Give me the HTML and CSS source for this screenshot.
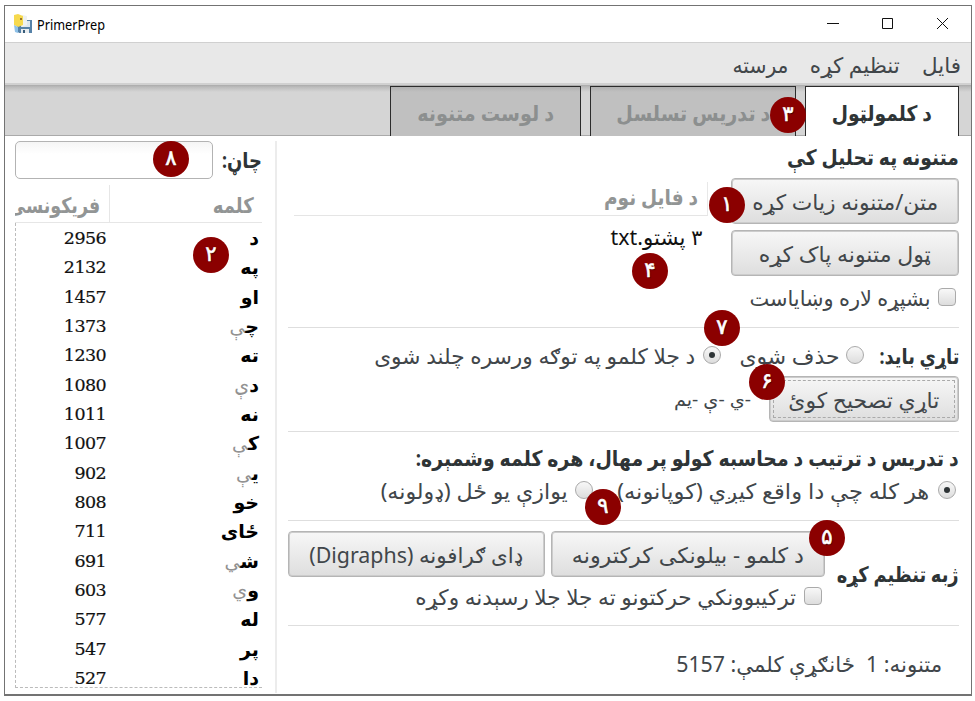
FILE: index.html
```html
<!DOCTYPE html>
<html lang="ps" dir="rtl">
<head>
<meta charset="utf-8">
<title>PrimerPrep</title>
<link rel="stylesheet" href="styles.css">
</head>
<body>
<div class="window">
  <header class="titlebar" dir="ltr">
    <svg class="logo" viewBox="0 0 20 20"><path d="M4 6h15v13H6l-2-2z" fill="#5682a8"/><path d="M8 7h9v6H8z" fill="#dce7ef"/><path d="M8 15h8v4H8z" fill="#e9edf0"/><path d="M10 16h2v3h-2z" fill="#385c7a"/><path d="M9 1l5 1v9l-5 2z" fill="#eef1f0"/><path d="M1 1l4-1 5 2v9l-5 2-4-2z" fill="#f6d94e"/><path d="M1 11l4 2v6l-3-1z" fill="#8ec1e8"/><path d="M7 4h2v2H7z" fill="#96752a"/></svg>
    <span class="app-name"><span class="fit" data-width="68">PrimerPrep</span></span>
    <svg class="controls" viewBox="0 0 124 14"><path d="M0 6.500h12M55.500 1.500h10v10h-10zM110 1l11 11M121 1l-11 11" fill="none" stroke="#111" stroke-width="1"/></svg>
  </header>
  <nav class="menu">
    <span class="fit" data-width="39">فایل</span>
    <span class="fit" data-width="90">تنظیم کړه</span>
    <span class="fit" data-width="56">مرسته</span>
  </nav>
  <div class="tabs">
    <div class="tab active"><span class="fit" data-width="100">د کلمولټول</span></div>
    <div class="tab second"><span class="fit" data-width="154">د تدریس تسلسل</span></div>
    <div class="tab third"><span class="fit" data-width="137">د لوست متنونه</span></div>
  </div>
  <div class="content">
    <main class="main">
      <section class="texts">
        <h2><span class="fit" data-width="172">متنونه په تحلیل کې</span></h2>
        <div class="texts-body">
          <div class="text-actions">
            <button class="btn"><span class="fit" data-width="186">متن/متنونه زیات کړه</span></button>
            <button class="btn"><span class="fit" data-width="172">ټول متنونه پاک کړه</span></button>
            <label class="option"><i class="check"></i><span class="fit" data-width="181">بشپړه لاره وښایاست</span></label>
          </div>
          <div class="files">
            <div class="files-head"><span class="fit" data-width="94">د فایل نوم</span></div>
            <div class="file"><span class="fit" data-width="92">۳ پشتو.txt</span></div>
          </div>
        </div>
      </section>
      <section class="affixes">
        <div class="row affix-options">
          <b><span class="fit" data-width="80">تاړي باید:</span></b>
          <i class="radio first"></i><span class="fit" data-width="100">حذف شوی</span>
          <i class="radio on next"></i><span class="fit" data-width="321">د جلا کلمو په توګه ورسره چلند شوی</span>
        </div>
        <div class="row affix-edit">
          <button class="btn focused"><span class="fit" data-width="151">تاړي تصحیح کوئ</span></button>
          <span class="affix-list"><span class="fit" data-width="77">-ي -ې -یم</span></span>
        </div>
      </section>
      <section class="counting">
        <h2><span class="fit" data-width="543">د تدریس د ترتیب د محاسبه کولو پر مهال، هره کلمه وشمېره:</span></h2>
        <div class="row count-options">
          <i class="radio on"></i><span class="fit" data-width="312">هر کله چې دا واقع کیږي (کوپانونه)</span>
          <i class="radio later"></i><span class="fit" data-width="187">یوازې یو ځل (ډولونه)</span>
        </div>
      </section>
      <section class="language">
        <h2><span class="fit" data-width="122">ژبه تنظیم کړه</span></h2>
        <div class="language-tools">
          <div class="row tool-buttons">
            <button class="btn wide"><span class="fit" data-width="232">د کلمو - بیلونکی کرکترونه</span></button>
            <button class="btn digraphs"><span class="fit" data-width="214">ډای ګرافونه (Digraphs)</span></button>
          </div>
          <label class="option"><i class="check"></i><span class="fit" data-width="381">ترکیبوونکي حرکتونو ته جلا جلا رسېدنه وکړه</span></label>
        </div>
      </section>
      <footer class="stats"><span class="fit" data-width="266">متنونه: 1&nbsp; ځانګړې کلمې: 5157</span></footer>
    </main>
    <aside class="words">
      <div class="filter"><b><span class="fit" data-width="40">چاڼ:</span></b><div class="input"></div></div>
      <div class="words-head"><div class="col-word"><span class="fit" data-width="41">کلمه</span></div><div class="col-freq"><span class="fit" data-width="92">فریکونسی</span></div></div>
      <div class="word-list">
        <div class="word"><b>د</b><span>2956</span></div>
        <div class="word"><b>په</b><span>2132</span></div>
        <div class="word"><b>او</b><span>1457</span></div>
        <div class="word"><b>چ<em>ې</em></b><span>1373</span></div>
        <div class="word"><b>ته</b><span>1230</span></div>
        <div class="word"><b>د<em>ې</em></b><span>1080</span></div>
        <div class="word"><b>نه</b><span>1011</span></div>
        <div class="word"><b>ک<em>ې</em></b><span>1007</span></div>
        <div class="word"><b>ی<em>ې</em></b><span>902</span></div>
        <div class="word"><b>خو</b><span>808</span></div>
        <div class="word"><b>ځای</b><span>711</span></div>
        <div class="word"><b>ش<em>ي</em></b><span>691</span></div>
        <div class="word"><b>و<em>ي</em></b><span>603</span></div>
        <div class="word"><b>له</b><span>577</span></div>
        <div class="word"><b>پر</b><span>547</span></div>
        <div class="word"><b>دا</b><span>527</span></div>
      </div>
    </aside>
  </div>
</div>
<div class="badge b1">۱</div><div class="badge b2">۲</div><div class="badge b3">۳</div>
<div class="badge b4">۴</div><div class="badge b5">۵</div><div class="badge b6">۶</div>
<div class="badge b7">۷</div><div class="badge b8">۸</div><div class="badge b9">۹</div>
<script src="fit.js"></script>
</body>
</html>
```
FILE: styles.css
```css
* { box-sizing: border-box; }
body { margin: 0; height: 701px; padding: 5px 3px 5px 4px; background: #fff; overflow: hidden; position: relative;
  font: 21.5px/30px "Noto Sans", "DejaVu Sans", sans-serif; color: #41464a; direction: rtl; }
h2 { margin: 0; font-size: 21.5px; line-height: 30px; font-weight: bold; color: #2e3436; }
b { color: #2e3436; }
.fit { display: inline-block; white-space: nowrap; flex: none; text-align: start; height: 30px; vertical-align: top; }
.fit > span { display: inline-block; transform-origin: 100% 50%; }
.window { width: 968px; height: 691px; border: 1px solid #737373; border-bottom-width: 2px; display: flex; flex-direction: column; background: #fff; }
.titlebar { height: 36px; display: flex; align-items: center; padding: 0 20px 0 8px; direction: ltr; }
.logo { width: 20px; height: 20px; }
.app-name { font-size: 14.5px; color: #000; margin-left: 4px; flex: 1; margin-top: -1px; }
.app-name .fit > span { transform-origin: 0 50%; }
.controls { width: 124px; height: 14px; }
.menu { height: 43px; border-top: 1px solid #d0d0d0; border-bottom: 2px solid #d0d0d0; background: #e8e8e8; display: flex; align-items: center; gap: 22px; padding: 4px 10px 0 0; }
.tabs { height: 51px; background: linear-gradient(#aaa 0, #bbb 2px, #d5d5d5 7px); border-bottom: 1px solid #aaa; display: flex; padding-right: 12px; padding-top: 1px; }
.tab { height: 50px; border: 1px solid #2c2c2c; border-bottom: 0; background: linear-gradient(#b0b0b0, #c0c0c0 5px); color: #8c8f8f; font-weight: bold; display: flex; align-items: center; justify-content: center; padding-top: 2px; }
.tab.active { width: 154px; background: #fff; color: #2e3436; }
.tab.second { width: 206px; margin-right: 9px; }
.tab.third { width: 191px; margin-right: 9px; }
.content { flex: 1; display: flex; min-height: 0; }
.main { width: 696px; height: 552px; margin-top: 5px; border-left: 2px solid #ececec; padding: 0 12px 0 11px; }
.texts { height: 187px; border-bottom: 1px solid #dedede; padding-top: 1px; }
.texts-body { display: flex; justify-content: space-between; padding-top: 6px; }
.text-actions { width: 228px; display: flex; flex-direction: column; gap: 6px; }
.btn { height: 46px; width: 100%; border: 1.5px solid #b5b5b5; box-shadow: inset 0 0 0 1px #ccc; border-radius: 4px; background: linear-gradient(#f7f7f7, #dedede); color: inherit; font: inherit; padding: 1px 0 0; display: flex; align-items: center; justify-content: center; flex: none; }
.option { display: flex; align-items: center; gap: 8px; padding-right: 3px; height: 30px; }
.check, .radio { display: block; width: 18px; height: 18px; border: 1.5px solid #aaa; border-radius: 4px; background: linear-gradient(#f8f8f8, #ddd); flex: none; }
.radio { border-radius: 50%; display: grid; place-items: center; margin-top: -2px; }
.radio.on::after { content: ""; width: 6px; height: 6px; border-radius: 50%; background: #2e3436; }
.text-actions .option { margin-top: 1px; }
.check { margin-top: -2px; }
.files { width: 414px; margin-left: 6px; margin-top: 4px; }
.files-head { height: 34px; border-right: 1px solid #e8e8e8; border-bottom: 1px solid #e5e5e5; padding-right: 9px; color: #929595; font-weight: bold; }
.file { padding: 6px 5px 0; color: #111; }
.row { display: flex; align-items: center; }
.affixes { height: 104px; border-bottom: 1px solid #dedede; padding-top: 13px; }
.affix-options { height: 30px; }
.radio.first { margin: -2px 15px 0 7px; }
.radio.next { margin: -2px 18px 0 8px; }
.affix-edit { padding-top: 5px; }
.affix-edit .btn { width: 190px; }
.btn.focused { outline: 1px dashed #aaa; outline-offset: -5px; }
.affix-list { font-size: 18px; margin-right: 18px; }
.counting { height: 89px; border-bottom: 1px solid #dedede; padding-top: 11px; }
.count-options { gap: 9px; padding-right: 3px; height: 36px; }
.radio.later { margin-right: 15px; margin-left: -2px; }
.language { height: 105px; border-bottom: 1px solid #dedede; display: flex; align-items: flex-start; gap: 12px; }
.language h2 { padding-top: 38px; }
.language-tools { width: 536px; padding-top: 10px; }
.tool-buttons { gap: 6px; }
.btn.wide { width: 274px; }
.btn.digraphs { width: 257px; }
.language-tools .option { margin-top: 4px; height: 32px; }
.stats { padding: 23px 17px 0 0; }
.words { width: 247px; margin-right: 13px; padding-top: 5px; }
.filter { height: 38px; display: flex; align-items: center; gap: 9px; }
.input { width: 198px; height: 38px; border: 1.5px solid #b3b3b3; border-radius: 5px; background: linear-gradient(#f5f5f5, #fff 12px); }
.words-head { height: 38px; margin-top: 6px; border-bottom: 1px solid #e6e6e6; display: flex; color: #929595; font-weight: bold; overflow: hidden; padding-top: 5px; }
.col-word { width: 153px; padding-right: 8px; border-left: 1px solid #e6e6e6; margin-top: -5px; padding-top: 5px; flex: none; }
.col-freq { width: 94px; padding-right: 9px; flex: none; }
.word-list { height: 465px; border-left: 1px dashed #bbb; border-bottom: 1px dashed #bbb; padding-top: 1px; }
.word { height: 29.33px; line-height: 29.33px; display: flex; padding-right: 3px; color: #111; }
.word b { width: 153px; color: #000; font-size: 19px; }
.word em { font-style: normal; font-weight: normal; color: #929292; }
.word span { font: 17.5px/29.33px "DejaVu Serif", serif; letter-spacing: -0.6px; direction: ltr; -webkit-text-stroke: 0.2px #111; }
.badge { position: absolute; width: 36px; height: 36px; border-radius: 50%; background: #8b0000; color: #fff; font: 21px/35px "DejaVu Sans", sans-serif; text-align: center; text-shadow: 1px 1px 1px #0008; -webkit-text-stroke: 0.6px #fff; }
.b1 { left: 709px; top: 187px; }
.b2 { left: 193px; top: 237px; }
.b3 { left: 770px; top: 97px; }
.b4 { left: 632px; top: 253px; }
.b5 { left: 809px; top: 520px; }
.b6 { left: 749px; top: 364px; }
.b7 { left: 704px; top: 310px; }
.b8 { left: 153px; top: 141px; }
.b9 { left: 585px; top: 489px; }
```
FILE: fit.js
```js
// Condenses or widens each label so that it fills the width reserved for it.
document.querySelectorAll('.fit').forEach((label) => {
  const target = Number(label.dataset.width);
  const inner = document.createElement('span');
  inner.append(...label.childNodes);
  label.append(inner);
  const natural = inner.getBoundingClientRect().width;
  label.style.width = `${target}px`;
  inner.style.transform = `scaleX(${target / natural})`;
});
```
